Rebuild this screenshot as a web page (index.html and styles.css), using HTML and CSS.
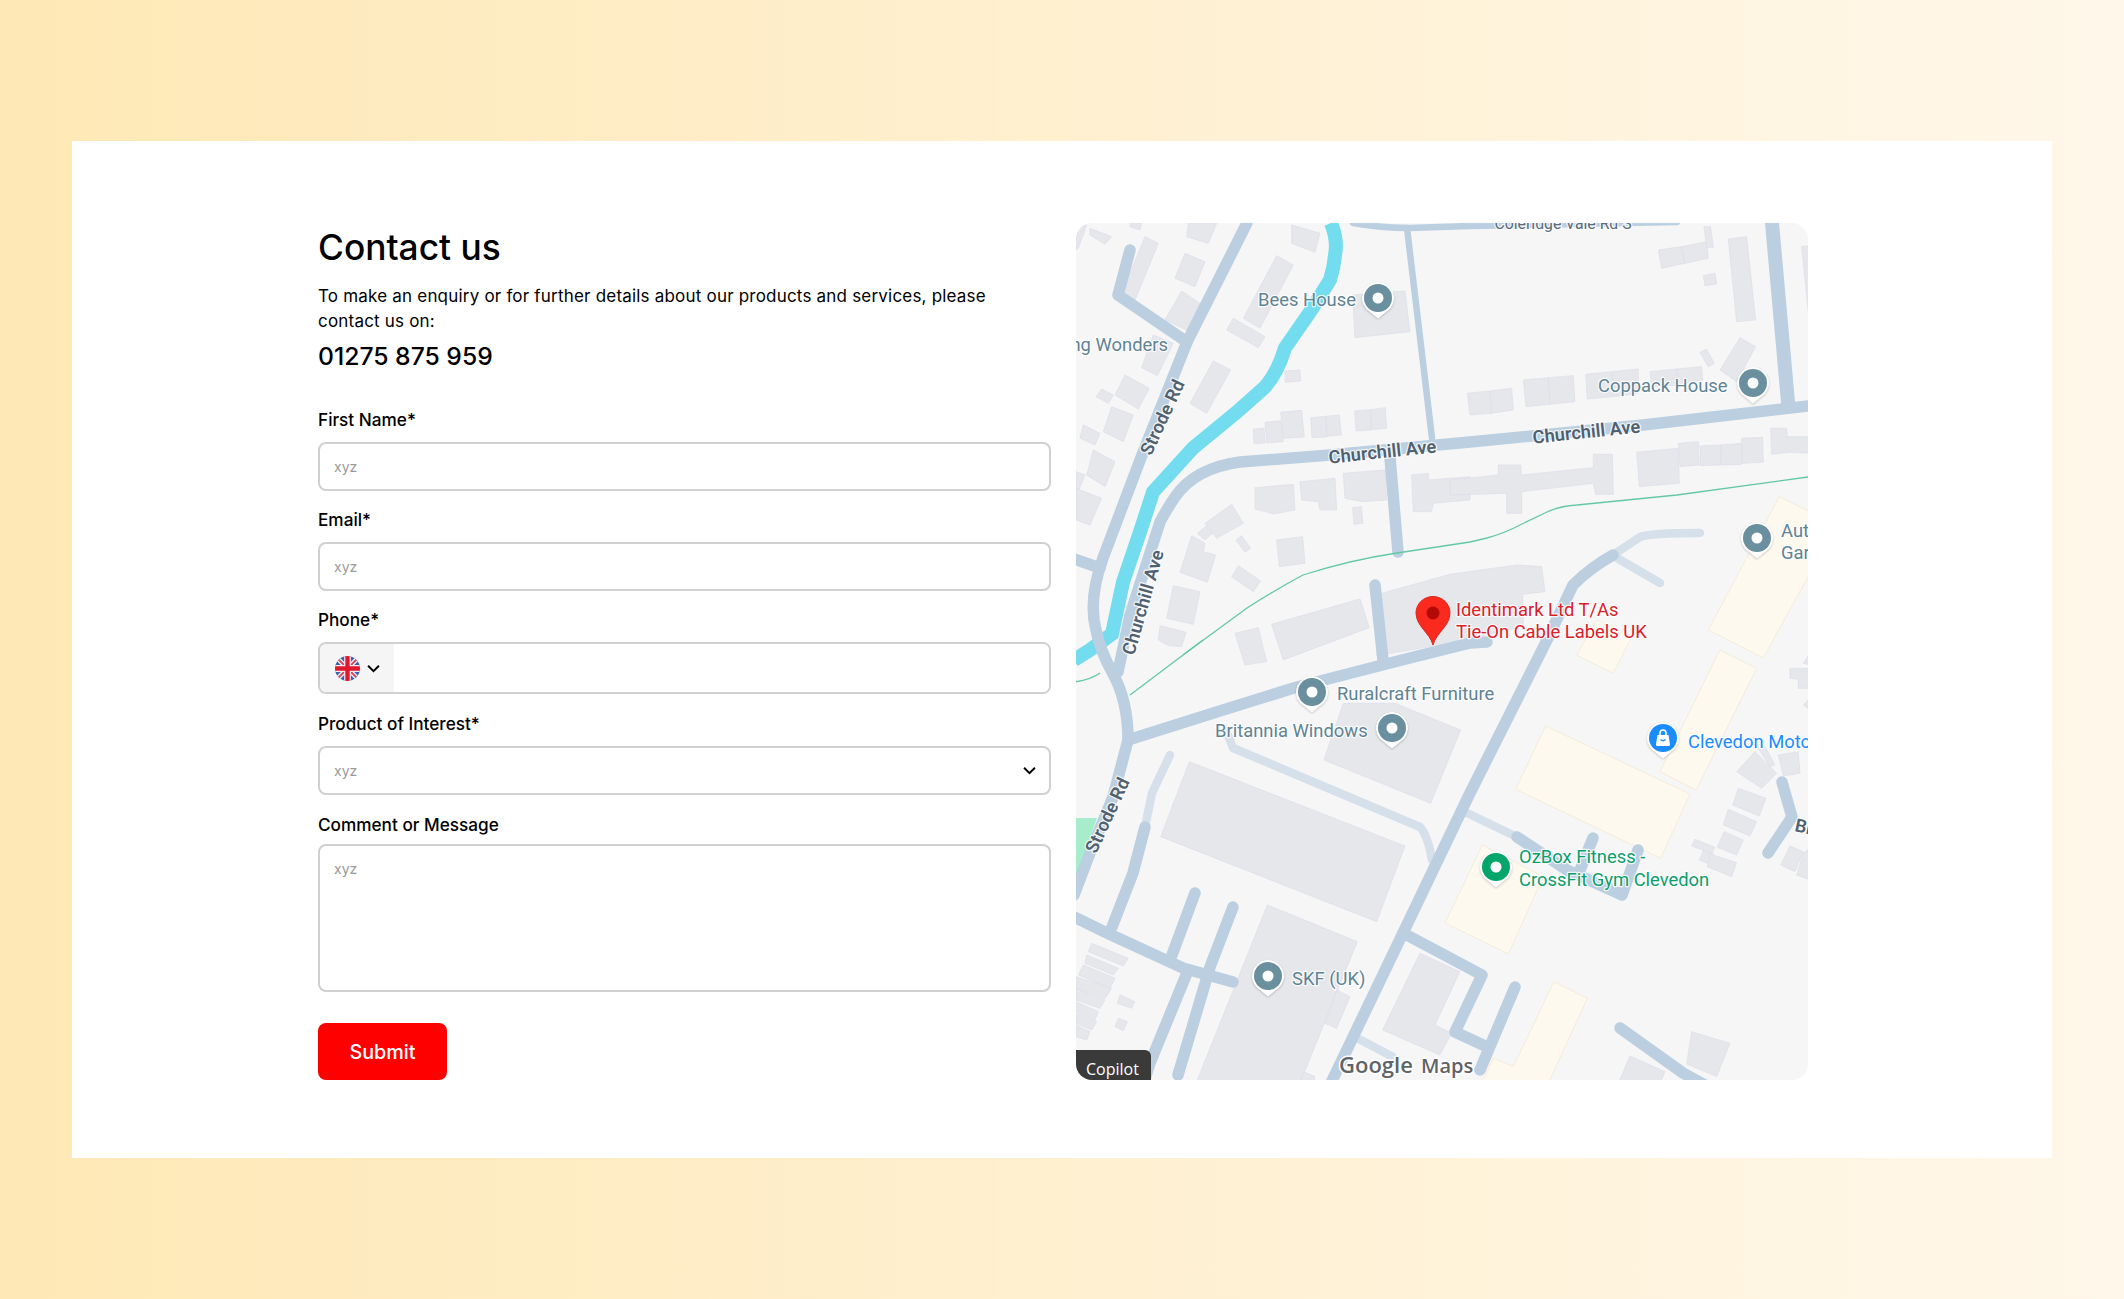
FILE: index.html

```html
<!DOCTYPE html>
<html lang="en">
<head>
    <meta charset="UTF-8">
    <meta name="viewport" content="width=device-width, initial-scale=1.0">
    <title>Contact us</title>
    <link rel="stylesheet" href="styles.css">
</head>
<body>
    <div class="card">
        <div class="form-col">
            <h1>Contact us</h1>
            <p class="intro">To make an enquiry or for further details about our products and services, please contact us on:</p>
            <p class="phone-no">01275 875 959</p>

            <form class="contact-form">
                <label for="firstName">First Name*</label>
                <input type="text" id="firstName" placeholder="xyz">

                <label for="email">Email*</label>
                <input type="text" id="email" placeholder="xyz">

                <label for="phone">Phone*</label>
                <div class="phone-field">
                    <div class="flag-btn">
                        <svg class="flag" viewBox="0 0 24 24">
                            <clipPath id="flagClip"><circle cx="12" cy="12" r="12"/></clipPath>
                            <g clip-path="url(#flagClip)">
                                <rect width="24" height="24" fill="#3f5fa8"/>
                                <path d="M0 0L24 24M24 0L0 24" stroke="#e9ecf5" stroke-width="4.5"/>
                                <path d="M0 0L24 24M24 0L0 24" stroke="#e0384c" stroke-width="1.6"/>
                                <path d="M12 0V24M0 12H24" stroke="#f4e9ec" stroke-width="6.5"/>
                                <path d="M12 0V24M0 12H24" stroke="#e0182d" stroke-width="4.2"/>
                            </g>
                        </svg>
                        <svg class="chev" viewBox="0 0 12 8"><path d="M1 1.5L6 6.5L11 1.5"/></svg>
                    </div>
                    <input type="text" id="phone">
                </div>

                <label for="product">Product of Interest*</label>
                <div class="select-wrap">
                    <select id="product"><option>xyz</option></select>
                    <svg class="chev select-chev" viewBox="0 0 12 8"><path d="M1 1.5L6 6.5L11 1.5"/></svg>
                </div>

                <label for="message" class="message-label">Comment or Message</label>
                <textarea id="message" placeholder="xyz"></textarea>

                <button type="button" class="submit-btn">Submit</button>
            </form>
        </div>

        <div class="map">
            <svg class="map-svg" viewBox="1076 223 732 857">
                <defs>
                    <g id="pin">
                        <path class="pin-back" d="M0 20L-11.5 10.5A15.5 15.5 0 1 1 11.5 10.5Z"/>
                        <circle r="14"/>
                        <circle r="5.5" fill="#fff"/>
                    </g>
                </defs>

                <!-- buildings, traced from the left half of the map -->
                <g class="bld" transform="translate(1070 215) scale(.3333)">
                    <polygon points="60,40 125,65 105,88 60,60"/>
                    <polygon points="180,22 215,25 210,45 180,35"/>
                    <polygon points="355,25 440,25 415,85 350,65"/>
                    <polygon points="18,40 50,30 25,100 18,105"/>
                    <polygon points="225,65 265,85 195,255 155,235"/>
                    <polygon points="345,115 405,140 375,215 315,190"/>
                    <polygon points="335,228 390,265 350,345 285,315"/>
                    <polygon points="620,122 670,150 570,340 520,310"/>
                    <polygon points="490,310 585,365 565,398 470,345"/>
                    <polygon points="665,30 750,55 735,112 665,85"/>
                    <polygon points="430,438 482,465 410,595 360,565"/>
                    <polygon points="250,360 310,385 262,482 215,458"/>
                    <polygon points="165,480 238,520 205,582 135,540"/>
                    <polygon points="95,522 130,540 115,565 78,545"/>
                    <polygon points="125,575 190,600 160,680 100,650"/>
                    <polygon points="40,630 90,655 75,690 30,670"/>
                    <polygon points="70,705 135,740 105,815 50,780"/>
                    <polygon points="18,770 45,780 25,830 18,830"/>
                    <polygon points="18,820 95,850 60,930 18,915"/>
                    <polygon points="645,468 690,465 692,498 645,502"/>
                    <polygon points="550,642 582,640 585,684 552,686"/>
                    <polygon points="585,622 632,617 640,680 590,684"/>
                    <polygon points="632,592 695,586 703,666 640,670"/>
                    <polygon points="722,608 768,604 770,666 726,668"/>
                    <polygon points="768,604 808,600 814,660 770,664"/>
                    <polygon points="854,588 902,584 904,645 858,648"/>
                    <polygon points="902,584 946,578 950,640 904,644"/>
                    <polygon points="555,818 670,808 675,885 612,897 555,882"/>
                    <polygon points="690,800 795,790 800,885 750,885 745,860 695,855"/>
                    <polygon points="820,775 945,765 950,855 875,860 825,850"/>
                    <polygon points="848,878 875,875 878,925 852,928"/>
                    <polygon points="1025,780 1075,775 1075,795 1200,785 1200,855 1090,865 1085,890 1030,890"/>
                    <polygon points="405,925 485,868 520,925 440,970"/>
                    <polygon points="382,955 410,932 428,955 405,975"/>
                    <polygon points="365,962 405,985 400,1010 437,1020 412,1102 330,1072"/>
                    <polygon points="515,962 542,1000 525,1012 498,975"/>
                    <polygon points="620,975 698,965 705,1045 628,1055"/>
                    <polygon points="505,1052 572,1098 550,1130 485,1085"/>
                    <polygon points="310,1112 390,1130 370,1228 290,1210"/>
                    <polygon points="270,1232 348,1252 335,1295 295,1292 265,1275"/>
                    <polygon points="605,1228 870,1152 898,1238 640,1335"/>
                    <polygon points="495,1255 565,1238 590,1340 525,1350"/>
                    <polygon points="848,240 1005,228 1020,350 855,368"/>
                </g>
                <!-- top right -->
                <g class="bld" transform="translate(1450 215) scale(.3333)">
                    <polygon points="625,105 695,95 705,145 635,160"/>
                    <polygon points="695,95 770,80 775,130 705,145"/>
                    <polygon points="762,35 782,35 790,97 770,97"/>
                    <polygon points="835,72 890,65 917,315 860,320"/>
                    <polygon points="760,182 795,175 800,207 765,212"/>
                    <polygon points="1055,95 1080,92 1080,340"/>
                    <polygon points="870,368 917,395 860,500 810,465"/>
                    <polygon points="770,402 793,445 775,455 750,412"/>
                    <polygon points="52,535 120,528 125,595 60,600"/>
                    <polygon points="120,528 185,520 190,585 125,595"/>
                    <polygon points="220,495 295,488 300,568 228,575"/>
                    <polygon points="295,488 370,482 375,560 300,568"/>
                    <polygon points="407,478 485,470 490,545 412,552"/>
                    <polygon points="485,470 565,462 565,535 490,545"/>
                    <polygon points="600,470 680,462 682,510 605,515"/>
                    <polygon points="680,462 755,455 758,495 682,510"/>
                    <polygon points="0,795 145,780 145,750 212,750 215,780 430,758 430,718 487,718 490,838 437,838 430,805 215,830 215,895 170,895 170,835 0,840"/>
                    <polygon points="560,712 685,700 688,805 568,815"/>
                    <polygon points="685,685 745,680 748,750 690,755"/>
                    <polygon points="750,693 812,690 812,750 752,752"/>
                    <polygon points="812,690 875,685 875,748 815,750"/>
                    <polygon points="875,670 938,667 940,742 878,745"/>
                    <polygon points="962,640 1010,640 1012,665 1080,665 1080,715 1020,712 965,718"/>
                    <polygon points="-205,1135 0,1078 200,1050 275,1055 285,1130 218,1138 220,1235 -30,1290 -220,1322"/>
                </g>
                <!-- bottom left -->
                <g class="bld" transform="translate(1070 640) scale(.3333)">
                    <polygon points="820,190 975,190 1172,270 1082,490 762,360"/>
                    <polygon points="358,365 1005,618 920,845 272,590"/>
                    <polygon points="592,795 862,905 690,1330 378,1330"/>
                    <polygon points="800,1050 840,1070 800,1165 765,1150"/>
                    <polygon points="1050,940 1170,995 1095,1155 1145,1180 1110,1245 938,1170"/>
                    <polygon points="65,910 175,955 160,978 55,935"/>
                    <polygon points="50,945 145,985 130,1005 45,970"/>
                    <polygon points="40,975 135,1015 120,1045 25,1005"/>
                    <polygon points="18,1010 125,1045 105,1075 18,1045"/>
                    <polygon points="18,1045 105,1080 90,1105 18,1080"/>
                    <polygon points="18,1085 85,1115 75,1140 18,1115"/>
                    <polygon points="18,1120 80,1145 65,1170 18,1150"/>
                    <polygon points="18,1155 60,1175 50,1200 18,1190"/>
                    <polygon points="150,1065 195,1085 185,1105 142,1090"/>
                    <polygon points="145,1135 172,1145 160,1172 135,1160"/>
                    <polygon points="700,1295 735,1310 730,1330 690,1330"/>
                </g>
                <!-- bottom right -->
                <g class="bld" transform="translate(1450 640) scale(.3333)">
                    <polygon points="1020,85 1080,85 1080,145 1045,145 1045,118 1020,115"/>
                    <polygon points="1060,70 1080,40 1080,75"/>
                    <polygon points="1060,195 1080,175 1080,210"/>
                    <polygon points="915,335 980,400 935,445 860,395"/>
                    <polygon points="925,325 945,320 975,375 960,380"/>
                    <polygon points="985,345 1045,335 1050,400 1000,408"/>
                    <polygon points="865,445 948,475 928,528 848,495"/>
                    <polygon points="835,508 920,545 900,588 820,555"/>
                    <polygon points="822,575 880,600 860,645 802,622"/>
                    <polygon points="735,598 795,622 785,640 725,618"/>
                    <polygon points="760,632 790,640 775,672 748,660"/>
                    <polygon points="780,642 860,668 845,710 772,680"/>
                    <polygon points="1020,618 1060,635 1035,695 992,675"/>
                    <polygon points="1060,640 1080,625 1080,720 1040,705"/>
                    <polygon points="725,1175 840,1210 800,1310 710,1272"/>
                    <polygon points="540,1248 645,1295 630,1330 505,1330"/>
                </g>

                <!-- yellow retail blocks -->
                <g class="retail" transform="translate(1450 215) scale(.3333)">
                    <polygon points="988,845 1080,890 1080,1075 940,1329 775,1245"/>
                </g>
                <g class="retail" transform="translate(1450 640) scale(.3333)">
                    <polygon points="380,45 490,100 545,-10 440,-60"/>
                    <polygon points="810,30 920,85 738,450 630,395"/>
                    <polygon points="287,258 720,462 632,655 197,448"/>
                    <polygon points="97,615 280,710 175,942 -15,849"/>
                    <polygon points="312,1025 412,1075 295,1330 95,1330 130,1255 190,1280"/>
                </g>
                <polygon class="park" points="1076,818 1097,818 1076,879"/>

                <path class="river" d="M1331 223Q1338 240 1335 255Q1334 268 1330 280L1310 312L1285 348Q1278 372 1265 387L1237 412L1193 448L1153 492L1140 532L1123 582L1112 634L1090 650L1074 660"/>

                <g class="road-faint">
                    <path d="M1227 733L1233 748L1420 827Q1428 836 1432 860"/>
                    <path d="M1170 755L1152 793L1145 827"/>
                    <path d="M1613 555L1640 537Q1650 533 1700 533"/>
                    <path d="M1617 558L1660 583"/>
                    <path d="M1467 813L1517 837"/>
                    <path d="M1357 1038L1393 1057"/>
                </g>
                <g class="road">
                    <path d="M1247 223L1187 342L1142 455L1103 558Q1088 600 1096 630Q1100 650 1112 672Q1128 700 1128 740L1113 797L1090 853L1074 895"/>
                    <path d="M1130 250L1118 295L1187 342"/>
                    <path d="M1074 559L1100 568"/>
                    <path d="M1808 406L1643 425L1470 442L1330 455L1240 462Q1195 468 1175 497Q1165 512 1160 522L1130 615L1118 672"/>
                    <path class="thick" d="M1772 223L1788 402"/>
                    <path class="thin" d="M1407 228L1432 438"/>
                    <path class="thin" d="M1353 223Q1380 228 1410 228L1470 226L1677 222"/>
                    <path d="M1390 458L1398 552"/>
                    <path d="M1128 740L1223 710L1297 687L1390 663L1470 643L1487 642"/>
                    <path d="M1375 585L1383 660"/>
                    <path d="M1330 1085L1403 933L1470 793L1547 640L1573 585Q1590 568 1613 555"/>
                    <path d="M1145 827L1133 873L1112 927"/>
                    <path d="M1074 917L1107 933L1183 968L1233 982"/>
                    <path d="M1195 893L1172 955"/>
                    <path d="M1233 907L1210 967L1178 1075"/>
                    <path d="M1187 973L1150 1063L1143 1085"/>
                    <path d="M1403 933L1482 975L1455 1032L1483 1045"/>
                    <path d="M1515 987L1480 1070"/>
                    <path d="M1620 1028L1683 1073L1705 1085"/>
                    <path d="M1782 782L1792 817L1768 853"/>
                    <path d="M1517 837L1567 870L1622 895L1638 850"/>
                    <path d="M1593 838L1580 870"/>
                </g>
                <path class="rail" d="M1183 655L1247 608Q1275 590 1303 575Q1350 560 1397 553L1470 542L1487 538Q1505 533 1520 525L1547 512Q1560 506 1577 505L1677 495L1808 477"/>
                <path class="rail" d="M1130 695L1203 640"/>
                <path class="rail" d="M1074 682Q1090 680 1100 673"/>

                <!-- road names -->
                <text class="road-name top-name" x="1563" y="229" text-anchor="middle">Coleridge Vale Rd S</text>
                <text class="road-name" transform="translate(1383 458) rotate(-6)" text-anchor="middle">Churchill Ave</text>
                <text class="road-name" transform="translate(1587 438) rotate(-6)" text-anchor="middle">Churchill Ave</text>
                <text class="road-name" transform="translate(1168 420) rotate(-65)" text-anchor="middle">Strode Rd</text>
                <text class="road-name" transform="translate(1113 818) rotate(-65)" text-anchor="middle">Strode Rd</text>
                <text class="road-name" transform="translate(1149 604) rotate(-74)" text-anchor="middle">Churchill Ave</text>
                <text class="road-name" transform="translate(1794 831) rotate(12)">Br</text>

                <!-- places -->
                <text class="place" x="1258" y="306">Bees House</text>
                <text class="place" x="1168" y="351" text-anchor="end">ng Wonders</text>
                <text class="place" x="1598" y="392">Coppack House</text>
                <text class="place" x="1781" y="537">Aut</text>
                <text class="place" x="1781" y="559">Gar</text>
                <text class="place" x="1337" y="700">Ruralcraft Furniture</text>
                <text class="place" x="1215" y="737">Britannia Windows</text>
                <text class="place" x="1292" y="985">SKF (UK)</text>
                <text class="place green" x="1519" y="863">OzBox Fitness -</text>
                <text class="place green" x="1519" y="886">CrossFit Gym Clevedon</text>
                <text class="place blue" x="1688" y="748">Clevedon Moto</text>
                <text class="place red" x="1456" y="616">Identimark Ltd T/As</text>
                <text class="place red" x="1456" y="638">Tie-On Cable Labels UK</text>

                <use href="#pin" class="pin" x="1378" y="298"/>
                <use href="#pin" class="pin" x="1753" y="383"/>
                <use href="#pin" class="pin" x="1757" y="538"/>
                <use href="#pin" class="pin" x="1312" y="692"/>
                <use href="#pin" class="pin" x="1392" y="728"/>
                <use href="#pin" class="pin" x="1268" y="976"/>
                <use href="#pin" class="pin pin-green" x="1496" y="867"/>
                <g transform="translate(1663 738)">
                    <use href="#pin" class="pin pin-blue"/>
                    <circle r="6" fill="#1a8cff"/>
                    <path d="M-5.5 -3H5.5L7 6.5Q7 8 5.5 8H-5.5Q-7 8 -7 6.5Z" fill="#fff"/>
                    <path d="M-3 -3V-5A3 3 0 0 1 3 -5V-3" fill="none" stroke="#fff" stroke-width="1.6"/>
                    <path d="M-2.5 1.5Q0 4 2.5 1.5" fill="none" stroke="#1a8cff" stroke-width="1.2"/>
                </g>

                <g transform="translate(1433 613)">
                    <path d="M0 32C-3 20 -17 13 -17 0A17 16.5 0 0 1 17 0C17 13 3 20 0 32Z" fill="#fb2a1f" stroke="#d8261c"/>
                    <circle r="6.5" fill="#b30a06"/>
                </g>

                <text class="logo" x="1339" y="1073">Google</text>
                <text class="logo logo-maps" x="1421" y="1073">Maps</text>
            </svg>
            <div class="copilot">Copilot</div>
        </div>
    </div>
</body>
</html>
```

FILE: styles.css

```css
* {
    margin: 0;
    padding: 0;
    box-sizing: border-box;
}

body {
    font-family: 'Inter', 'Open Sans', sans-serif;
    background: linear-gradient(90deg, #fee8b5 0%, #fff7ea 100%);
    min-height: 100vh;
    padding: 141px 72px;
    color: #000;
}

.card {
    height: 1017px;
    background: #fff;
    padding: 82px 244px 0 246px;
    display: grid;
    grid-template-columns: 733px 732px;
    column-gap: 25px;
    align-items: start;
}

h1 {
    font-size: 35.3px;
    font-weight: 500;
    line-height: 50px;
    margin-bottom: 11px;
}

.intro {
    font-size: 17px;
    letter-spacing: 0.2px;
    line-height: 25px;
    max-width: 700px;
}

.phone-no {
    font-size: 24.7px;
    font-weight: 500;
    line-height: 34px;
    margin-top: 5px;
}

.contact-form {
    display: flex;
    flex-direction: column;
    margin-top: 35px;
}

.contact-form label {
    font-size: 17.2px;
    font-weight: 500;
    line-height: 24px;
    margin-bottom: 10px;
}

.contact-form .message-label {
    margin-bottom: 7px;
}

.contact-form input,
.contact-form select,
.contact-form textarea {
    width: 100%;
    height: 49px;
    border: 2px solid #d0d0d0;
    border-radius: 8px;
    background: #fff;
    padding: 0 14px;
    font-family: inherit;
    font-size: 14px;
    color: #9a9a9a;
    margin-bottom: 17px;
    outline: none;
}

.contact-form input::placeholder,
.contact-form textarea::placeholder {
    color: #9a9a9a;
}

.contact-form select {
    appearance: none;
    display: block;
    margin-bottom: 18px;
}

.contact-form textarea {
    height: 148px;
    padding: 14px 14px;
    resize: none;
    margin-bottom: 31px;
}

.phone-field {
    display: flex;
    height: 52px;
    border: 2px solid #d0d0d0;
    border-radius: 8px;
    overflow: hidden;
    margin-bottom: 18px;
}

.phone-field input {
    flex: 1;
    height: auto;
    border: none;
    border-radius: 0;
    margin: 0;
}

.flag-btn {
    width: 74px;
    background: #f5f5f5;
    display: flex;
    align-items: center;
    padding-left: 15px;
    gap: 7px;
}

.flag {
    width: 25px;
    height: 25px;
}

.chev {
    width: 13px;
    height: 9px;
    fill: none;
    stroke: #000;
    stroke-width: 1.8;
}

.select-wrap {
    position: relative;
}

.select-chev {
    position: absolute;
    right: 15px;
    top: 20px;
}

.submit-btn {
    width: 129px;
    height: 57px;
    background: #ff0000;
    color: #fff;
    border: none;
    border-radius: 8px;
    font-family: inherit;
    font-size: 19.8px;
    font-weight: 500;
}

/* map */
.map {
    position: relative;
    height: 857px;
    border-radius: 16px;
    overflow: hidden;
    background: #f6f6f7;
}

.map-svg {
    display: block;
    width: 732px;
    height: 857px;
    font-family: 'Roboto', sans-serif;
}

.bld polygon {
    fill: #e6e7eb;
    stroke: #dcdde8;
    stroke-width: 2;
}

.retail polygon {
    fill: #fdf9ef;
    stroke: #f3e6cc;
    stroke-width: 2;
}

.park {
    fill: #a8edcb;
}

.river {
    fill: none;
    stroke: #73dcef;
    stroke-width: 14;
}

.road path,
.road-faint path {
    fill: none;
    stroke-width: 11.5;
    stroke-linecap: round;
    stroke-linejoin: round;
}

.road path {
    stroke: #bbcfe1;
}

.road .thick {
    stroke-width: 14;
}

.road .thin {
    stroke-width: 6.5;
}

.road-faint path {
    stroke: #d6e0ea;
    stroke-width: 8.5;
}

.rail {
    fill: none;
    stroke: #63c9a3;
    stroke-width: 1.3;
}

.road-name,
.place,
.logo {
    paint-order: stroke;
    stroke: #fff;
    stroke-linejoin: round;
}

.road-name {
    font-size: 18.3px;
    font-weight: 600;
    fill: #51606f;
    stroke-width: 2.5;
    stroke-opacity: .8;
}

.top-name {
    font-size: 15.8px;
    font-weight: 400;
    fill: #5b6b7a;
}

.place {
    font-size: 18.4px;
    fill: #5f8393;
    stroke-width: 2.5;
    stroke-opacity: .8;
}

.place.green {
    fill: #0b9d6a;
}

.place.blue {
    fill: #1a8cff;
}

.place.red {
    fill: #d8202a;
}

.logo {
    font-family: 'Open Sans', sans-serif;
    font-size: 22px;
    font-weight: 600;
    fill: #5f6368;
    stroke-width: 3;
}

.logo-maps {
    font-size: 20px;
}

.pin {
    fill: #6a8f9e;
}

.pin-green {
    fill: #06a56c;
}

.pin-blue {
    fill: #1a8cff;
}

.pin-back {
    fill: #fff;
    stroke: #fff;
    stroke-width: 1;
    stroke-linejoin: round;
    filter: drop-shadow(0 1px 1px rgba(0, 0, 0, 0.2));
}

.copilot {
    position: absolute;
    left: 0;
    bottom: 0;
    width: 75px;
    height: 30px;
    background: #3a3a3a;
    border-top-right-radius: 6px;
    color: #fff;
    font-family: 'Open Sans', sans-serif;
    font-size: 16px;
    line-height: 20px;
    padding: 9px 0 0 10px;
}
```
